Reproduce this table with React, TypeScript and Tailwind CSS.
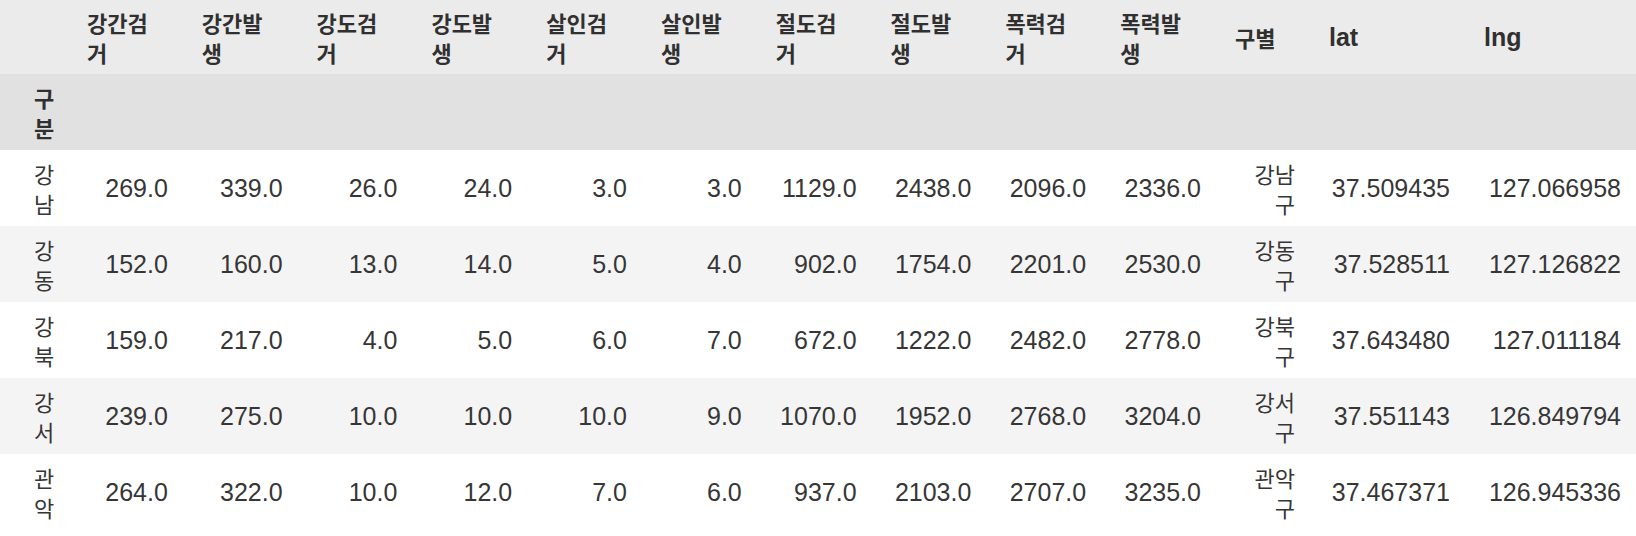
import React from 'react';

const columns = [
  '강간검거', '강간발생', '강도검거', '강도발생', '살인검거',
  '살인발생', '절도검거', '절도발생', '폭력검거', '폭력발생',
];

const rows = [
  { idx: '강남', vals: [269, 339, 26, 24, 3, 3, 1129, 2438, 2096, 2336], gu: '강남구', lat: '37.509435', lng: '127.066958' },
  { idx: '강동', vals: [152, 160, 13, 14, 5, 4, 902, 1754, 2201, 2530], gu: '강동구', lat: '37.528511', lng: '127.126822' },
  { idx: '강북', vals: [159, 217, 4, 5, 6, 7, 672, 1222, 2482, 2778], gu: '강북구', lat: '37.643480', lng: '127.011184' },
  { idx: '강서', vals: [239, 275, 10, 10, 10, 9, 1070, 1952, 2768, 3204], gu: '강서구', lat: '37.551143', lng: '126.849794' },
  { idx: '관악', vals: [264, 322, 10, 12, 7, 6, 937, 2103, 2707, 3235], gu: '관악구', lat: '37.467371', lng: '126.945336' },
];

const ko = 'block text-[22px] leading-[30px] [font-family:"Noto_Sans_CJK_KR",sans-serif]';

const App: React.FC = () => {
  return (
    <div className="w-[1636px] h-[536px] bg-white overflow-hidden text-[#363636] font-['Liberation_Sans','Noto_Sans_CJK_KR',sans-serif]">
      <table className="table-fixed border-collapse w-[1636px] text-[25px] leading-[30px]">
        <colgroup>
          <col className="w-[70px]" />
          {columns.map((c) => (
            <col key={c} className="w-[114.8px]" />
          ))}
          <col className="w-[94px]" />
          <col className="w-[155px]" />
          <col className="w-[169px]" />
        </colgroup>
        <thead className="text-[#303030]">
          <tr className="bg-[#ebebeb] h-[74px]">
            <th className="pl-[34px] pr-[12px] p-0"></th>
            {columns.map((c) => (
              <th key={c} className="px-[17px] py-[7px] text-left align-middle font-bold">
                <span className={ko}>{c}</span>
              </th>
            ))}
            <th className="px-[17px] py-0 text-left align-middle font-bold">
              <span className={ko}>구별</span>
            </th>
            <th className="px-[17px] py-0 text-left align-middle font-bold">lat</th>
            <th className="pl-[17px] pr-[15px] py-0 text-left align-middle font-bold">lng</th>
          </tr>
          <tr className="bg-[#e1e1e1] h-[76px]">
            <th className="pl-[34px] pr-[12px] py-[8px] text-left align-middle font-bold">
              <span className={ko}>구분</span>
            </th>
            {Array.from({ length: 13 }, (_, i) => (
              <th key={i} className="p-0"></th>
            ))}
          </tr>
        </thead>
        <tbody>
          {rows.map((r, i) => (
            <tr key={r.idx} className={`h-[76px] ${i % 2 === 1 ? 'bg-[#f4f4f4]' : 'bg-white'}`}>
              <th className="pl-[34px] pr-[12px] py-[8px] text-left align-middle font-normal">
                <span className={ko}>{r.idx}</span>
              </th>
              {r.vals.map((v, j) => (
                <td key={j} className="px-[17px] py-0 text-right align-middle">
                  {v.toFixed(1)}
                </td>
              ))}
              <td className="px-[17px] py-[8px] text-right align-middle">
                <span className={ko}>{r.gu}</span>
              </td>
              <td className="px-[17px] py-0 text-right align-middle">{r.lat}</td>
              <td className="pl-[17px] pr-[15px] py-0 text-right align-middle">{r.lng}</td>
            </tr>
          ))}
        </tbody>
      </table>
    </div>
  );
};

export default App;
